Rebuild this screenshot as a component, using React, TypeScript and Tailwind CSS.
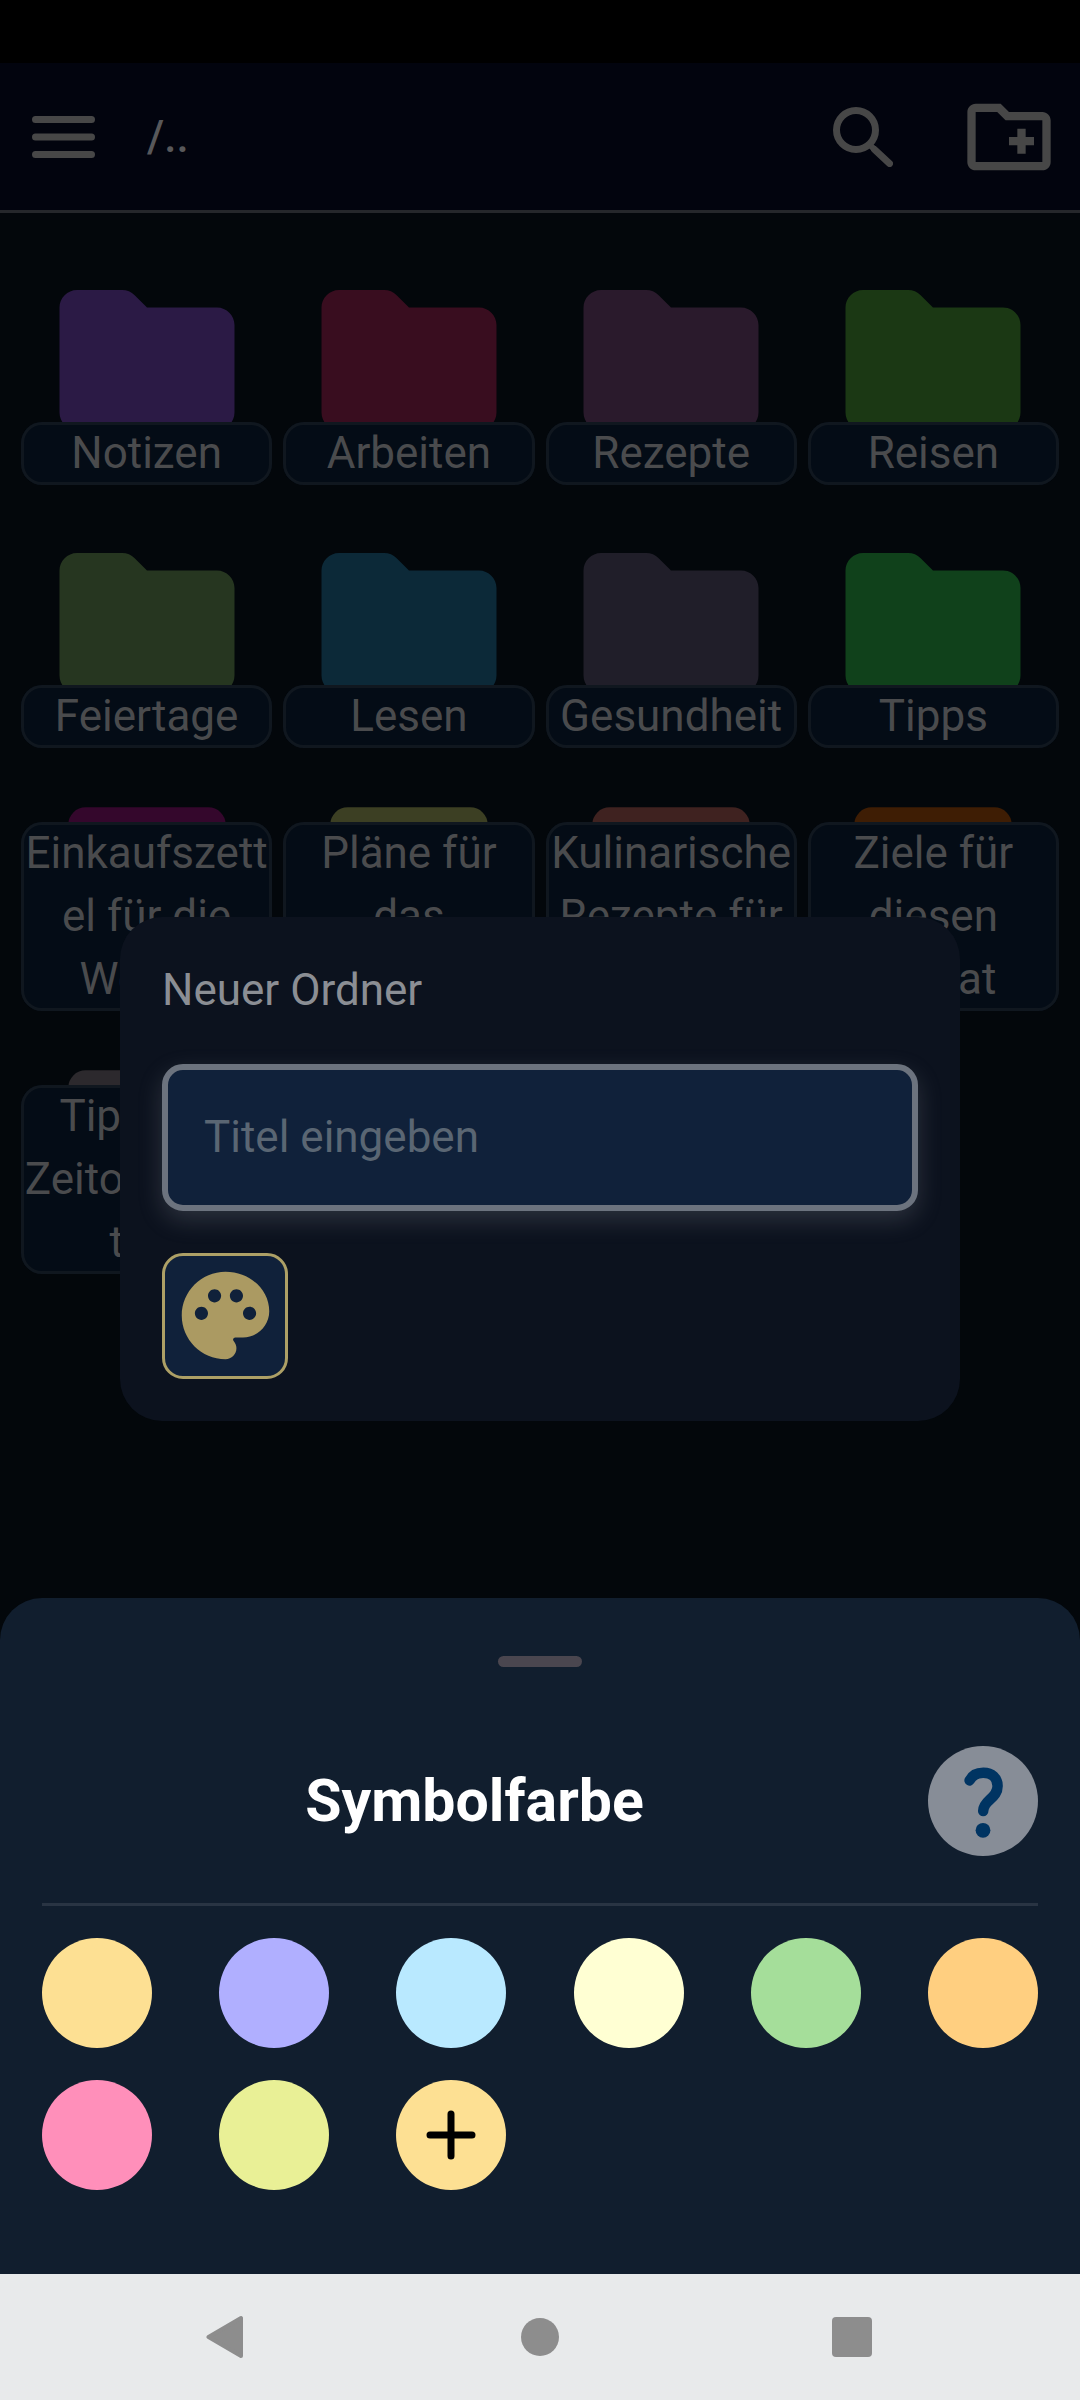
type ItemKind = "folder" | "note";

const items: { title: string; kind: ItemKind; color: string }[] = [
  { title: "Notizen", kind: "folder", color: "text-[#2b1a45]" },
  { title: "Arbeiten", kind: "folder", color: "text-[#390d1f]" },
  { title: "Rezepte", kind: "folder", color: "text-[#2a1a2c]" },
  { title: "Reisen", kind: "folder", color: "text-[#1b3814]" },
  { title: "Feiertage", kind: "folder", color: "text-[#263620]" },
  { title: "Lesen", kind: "folder", color: "text-[#0c2938]" },
  { title: "Gesundheit", kind: "folder", color: "text-[#201e29]" },
  { title: "Tipps", kind: "folder", color: "text-[#10411b]" },
  { title: "Einkaufszettel für die Woche", kind: "note", color: "text-[#34072c]" },
  { title: "Pläne für das Abendessen", kind: "note", color: "text-[#3c3f23]" },
  { title: "Kulinarische Rezepte für Gäste", kind: "note", color: "text-[#3f2220]" },
  { title: "Ziele für diesen Monat", kind: "note", color: "text-[#3e1d04]" },
  { title: "Tipps für Zeitorganisation", kind: "note", color: "text-[#2c292d]" },
];

const swatches: { name: string; color: string }[] = [
  { name: "Gelb", color: "bg-[#fde093]" },
  { name: "Lavendel", color: "bg-[#b0afff]" },
  { name: "Hellblau", color: "bg-[#b9e9ff]" },
  { name: "Creme", color: "bg-[#ffffd3]" },
  { name: "Grün", color: "bg-[#a5de9a]" },
  { name: "Orange", color: "bg-[#ffcf80]" },
  { name: "Rosa", color: "bg-[#ff8fba]" },
  { name: "Limette", color: "bg-[#e9f096]" },
];

function ItemIcon({ kind }: { kind: ItemKind }) {
  return (
    <svg viewBox="0 0 24 24" className="size-[210px]" fill="currentColor" aria-hidden="true">
      {kind === "folder" ? (
        <path d="M10.59 4.59C10.21 4.21 9.7 4 9.17 4H4c-1.1 0-2 .9-2 2v12c0 1.1.9 2 2 2h16c1.1 0 2-.9 2-2V8c0-1.1-.9-2-2-2h-8l-1.41-1.41z" />
      ) : (
        <rect x="3" y="3" width="18" height="18" rx="2" />
      )}
    </svg>
  );
}

function Header() {
  return (
    <header className="flex h-[150px] items-center border-b-[3px] border-[#25272b] bg-[#02040e] pr-[21px] pl-8 text-[#474747]">
      <button type="button" aria-label="Menü">
        <svg viewBox="0 0 63 42" className="h-[42px] w-[63px]" stroke="currentColor" strokeWidth="7" strokeLinecap="round">
          <path d="M3.5 3.5h56M3.5 21h56M3.5 38.5h56" />
        </svg>
      </button>
      <h1 className="ml-[52px] flex-1 text-[44px] font-medium text-[#58585a]">/..</h1>
      <button type="button" aria-label="Suchen">
        <svg viewBox="0 0 60 60" className="size-[60px]" fill="none" stroke="currentColor" strokeWidth="7">
          <circle cx="23" cy="23" r="19.5" />
          <path d="M41.5 42.5L56.5 56.5" strokeLinecap="round" />
          <path d="M38 39L44 45" strokeWidth="6" />
        </svg>
      </button>
      <button type="button" aria-label="Neuer Ordner" className="ml-[66px]">
        <svg viewBox="0 0 24 24" className="size-[100px]" fill="currentColor">
          <path d="M20 6h-8l-2-2H4c-1.11 0-1.99.89-1.99 2L2 18c0 1.11.89 2 2 2h16c1.11 0 2-.89 2-2V8c0-1.11-.89-2-2-2zm0 12H4V6h5.17l2 2H20v10zm-8-4h2v2h2v-2h2v-2h-2v-2h-2v2h-2v2z" />
        </svg>
      </button>
    </header>
  );
}

function ItemGrid() {
  return (
    <ul className="grid grid-cols-4 gap-x-[11px] gap-y-[33px] px-[21px] pt-[42px]">
      {items.map((item) => (
        <li key={item.title} className="grid h-[230px] justify-items-center">
          <span className={`col-start-1 row-start-1 self-start ${item.color}`}>
            <ItemIcon kind={item.kind} />
          </span>
          <span className="z-0 col-start-1 row-start-1 w-full self-end rounded-[21px] bg-[#040c16] text-center text-[44px] leading-[63px] [overflow-wrap:anywhere] text-[#4a4b4d] inset-ring-3 inset-ring-[#10171f]">
            {item.title}
          </span>
        </li>
      ))}
    </ul>
  );
}

function NewFolderDialog() {
  return (
    <section
      role="dialog"
      aria-labelledby="dialog-title"
      className="flex w-7/9 flex-col items-start gap-[42px] rounded-[42px] bg-[#0c121e] p-[42px]"
    >
      <label id="dialog-title" htmlFor="folder-title" className="text-[44px] leading-[63px] text-[#8b8e94]">
        Neuer Ordner
      </label>
      <input
        id="folder-title"
        type="text"
        placeholder="Titel eingeben"
        className="h-[147px] w-full rounded-[21px] border-[6px] border-[#6c737e] bg-[#10213a] px-9 text-[44px] text-[#8b8e94] shadow-[0_9px_24px_rgba(160,165,175,0.22)] outline-none placeholder:text-[#5a6673]"
      />
      <button
        type="button"
        aria-label="Symbolfarbe wählen"
        className="flex size-[126px] items-center justify-center rounded-[21px] border-[3px] border-[#ada066] bg-[#10213a] text-[#ab9a62]"
      >
        <svg viewBox="0 0 24 24" className="size-[105px] shrink-0" fill="currentColor">
          <path d="M12 2C6.49 2 2 6.49 2 12s4.49 10 10 10c1.38 0 2.5-1.12 2.5-2.5 0-.61-.23-1.2-.64-1.67-.08-.1-.13-.21-.13-.33 0-.28.22-.5.5-.5H16c3.31 0 6-2.69 6-6 0-4.96-4.49-9-10-9zm5.5 11c-.83 0-1.5-.67-1.5-1.5s.67-1.5 1.5-1.5 1.5.67 1.5 1.5-.67 1.5-1.5 1.5zm-3-4c-.83 0-1.5-.67-1.5-1.5S13.67 6 14.5 6s1.5.67 1.5 1.5S15.33 9 14.5 9zM5 11.5c0-.83.67-1.5 1.5-1.5s1.5.67 1.5 1.5S7.33 13 6.5 13 5 12.33 5 11.5zm6-4c0 .83-.67 1.5-1.5 1.5S8 8.33 8 7.5 8.67 6 9.5 6s1.5.67 1.5 1.5z" />
        </svg>
      </button>
    </section>
  );
}

function ColorSheet() {
  return (
    <section aria-label="Symbolfarbe" className="absolute inset-x-0 bottom-0 rounded-t-[42px] bg-[#111e2e] px-[42px] pt-[58px] pb-[84px]">
      <div className="mx-auto h-[11px] w-[84px] rounded-full bg-[#4a464f]" />
      <div className="mt-[79px] flex items-center gap-[21px] border-b-[3px] border-[#293443] pb-[47px]">
        <h2 className="flex-1 text-center text-[59px] leading-[68px] font-bold text-white">Symbolfarbe</h2>
        <button type="button" aria-label="Hilfe" className="size-[110px] rounded-full bg-[#878d97]">
          <svg viewBox="0 0 110 110" className="size-full" fill="none" stroke="#003462" strokeWidth="10.5" strokeLinecap="round">
            <path d="M41.6 34.4C44.2 29.4 49 26.8 55.3 26.8c8.6 0 14.3 5.2 14.3 13.2 0 6.5-3.6 10-7.6 13.5-4.5 4-6.8 7-6.8 11.5" />
            <circle cx="55" cy="84.3" r="7.4" fill="#003462" stroke="none" />
          </svg>
        </button>
      </div>
      <div className="mt-8 grid grid-cols-[repeat(6,110px)] justify-between gap-y-8">
        {swatches.map((swatch) => (
          <button
            key={swatch.name}
            type="button"
            aria-label={swatch.name}
            className={`size-[110px] rounded-full ${swatch.color}`}
          />
        ))}
        <button type="button" aria-label="Farbe hinzufügen" className="size-[110px] rounded-full bg-[#fde093]">
          <svg viewBox="0 0 110 110" className="size-full" stroke="black" strokeWidth="7" strokeLinecap="round">
            <path d="M55 34v42M34 55h42" />
          </svg>
        </button>
      </div>
    </section>
  );
}

function NavigationBar() {
  return (
    <nav className="flex h-[126px] items-center justify-around bg-[#e8eaeb] px-[72px] text-[#8d8d8d]">
      <button type="button" aria-label="Zurück">
        <svg viewBox="0 0 44 44" className="size-[44px]" fill="currentColor" stroke="currentColor" strokeWidth="4" strokeLinejoin="round">
          <path d="M2.5 22L35 3v38z" />
        </svg>
      </button>
      <button type="button" aria-label="Startseite">
        <svg viewBox="0 0 44 44" className="size-[44px]" fill="currentColor">
          <circle cx="22" cy="22" r="19" />
        </svg>
      </button>
      <button type="button" aria-label="Übersicht">
        <svg viewBox="0 0 44 44" className="size-[44px]" fill="currentColor">
          <rect x="2" y="2" width="40" height="40" rx="4" />
        </svg>
      </button>
    </nav>
  );
}

export default function App() {
  return (
    <div className="flex min-h-screen flex-col bg-black font-[Roboto,sans-serif]">
      <div className="h-[63px]" />
      <main className="relative flex-1 bg-[#03070b]">
        <Header />
        <ItemGrid />
        <div className="absolute inset-0 flex items-center justify-center">
          <NewFolderDialog />
        </div>
        <ColorSheet />
      </main>
      <NavigationBar />
    </div>
  );
}
